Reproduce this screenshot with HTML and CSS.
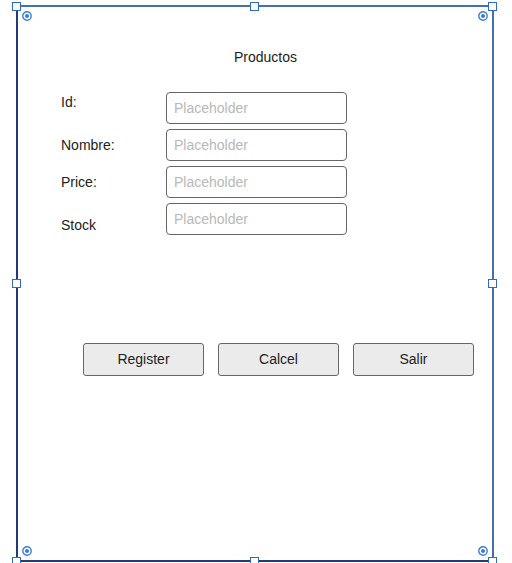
FILE: index.html
```html
<!DOCTYPE html>
<html>
<head>
<meta charset="utf-8">
<link rel="stylesheet" href="styles.css">
</head>
<body>
<div class="frame">
  <div class="title">Productos</div>
  <div class="form">
    <label class="lbl lbl-top">Id:</label>
    <input class="field" placeholder="Placeholder">
    <label class="lbl lbl-mid">Nombre:</label>
    <input class="field" placeholder="Placeholder">
    <label class="lbl lbl-mid">Price:</label>
    <input class="field" placeholder="Placeholder">
    <label class="lbl lbl-bottom">Stock</label>
    <input class="field" placeholder="Placeholder">
  </div>
  <div class="actions">
    <button class="btn">Register</button>
    <button class="btn">Calcel</button>
    <button class="btn">Salir</button>
  </div>
</div>
<span class="handle h-tl"></span>
<span class="handle h-tm"></span>
<span class="handle h-tr"></span>
<span class="handle h-ml"></span>
<span class="handle h-mr"></span>
<span class="handle h-bl"></span>
<span class="handle h-bm"></span>
<span class="handle h-br"></span>
<svg class="pin p-tl" width="10" height="10" viewBox="0 0 10 10"><circle cx="5" cy="5" r="4.2" fill="none" stroke="#3a7fd6" stroke-width="1.4"/><circle cx="5" cy="5" r="2.1" fill="#3a7fd6"/></svg>
<svg class="pin p-tr" width="10" height="10" viewBox="0 0 10 10"><circle cx="5" cy="5" r="4.2" fill="none" stroke="#3a7fd6" stroke-width="1.4"/><circle cx="5" cy="5" r="2.1" fill="#3a7fd6"/></svg>
<svg class="pin p-bl" width="10" height="10" viewBox="0 0 10 10"><circle cx="5" cy="5" r="4.2" fill="none" stroke="#3a7fd6" stroke-width="1.4"/><circle cx="5" cy="5" r="2.1" fill="#3a7fd6"/></svg>
<svg class="pin p-br" width="10" height="10" viewBox="0 0 10 10"><circle cx="5" cy="5" r="4.2" fill="none" stroke="#3a7fd6" stroke-width="1.4"/><circle cx="5" cy="5" r="2.1" fill="#3a7fd6"/></svg>
</body>
</html>
```
FILE: styles.css
```css
html, body {
  margin: 0;
  padding: 0;
  background: #ffffff;
  font-family: "Liberation Sans", Arial, sans-serif;
  width: 512px;
  height: 563px;
  overflow: hidden;
  position: relative;
}

.frame {
  margin: 5px 0 0 16px;
  width: 478px;
  height: 557px;
  box-sizing: border-box;
  border-left: 2px solid #1d3c78;
  border-bottom: 2px solid #1d3c78;
  border-top: 2px solid #4470b0;
  border-right: 2px solid #4470b0;
  display: flex;
  flex-direction: column;
}

.title {
  margin-top: 42px;
  padding-left: 216px;
  font-size: 14px;
  line-height: 16px;
  color: #222;
}

.form {
  margin-top: 27px;
  margin-left: 43px;
  display: grid;
  grid-template-columns: 105px 181px;
  grid-auto-rows: 32px;
  row-gap: 5px;
}

.lbl {
  font-size: 14px;
  line-height: 16px;
  color: #222;
}

.lbl-top { align-self: start; padding-top: 2px; }
.lbl-mid { align-self: center; margin-top: -1px; }
.lbl-bottom { align-self: end; padding-bottom: 2px; }

.field {
  box-sizing: border-box;
  width: 181px;
  height: 32px;
  margin: 0;
  border: 1px solid #666;
  border-radius: 4px;
  padding: 0 0 1px 7px;
  font-family: "Liberation Sans", Arial, sans-serif;
  font-size: 14px;
  color: #222;
  background: #fff;
}

.field::placeholder { color: #b8b8b8; }

.actions {
  margin-top: 108px;
  margin-left: 65px;
  display: flex;
  gap: 14px;
}

.btn {
  box-sizing: border-box;
  width: 121px;
  height: 33px;
  margin: 0;
  padding: 0 0 2px 0;
  border: 1px solid #666;
  border-radius: 3px;
  background: #ebebeb;
  font-family: "Liberation Sans", Arial, sans-serif;
  font-size: 14px;
  color: #222;
}

.handle {
  position: absolute;
  width: 9px;
  height: 9px;
  box-sizing: border-box;
  background: #fff;
  border: 1px solid #2e6cc2;
}
.h-tl { left: 12px; top: 2px; }
.h-tm { left: 250px; top: 2px; }
.h-tr { left: 488px; top: 2px; }
.h-ml { left: 12px; top: 279px; }
.h-mr { left: 488px; top: 279px; }
.h-bl { left: 12px; top: 557px; }
.h-bm { left: 250px; top: 557px; }
.h-br { left: 488px; top: 557px; }

.pin { position: absolute; }
.p-tl { left: 22px; top: 11px; }
.p-tr { left: 478px; top: 11px; }
.p-bl { left: 22px; top: 546px; }
.p-br { left: 478px; top: 546px; }
```
